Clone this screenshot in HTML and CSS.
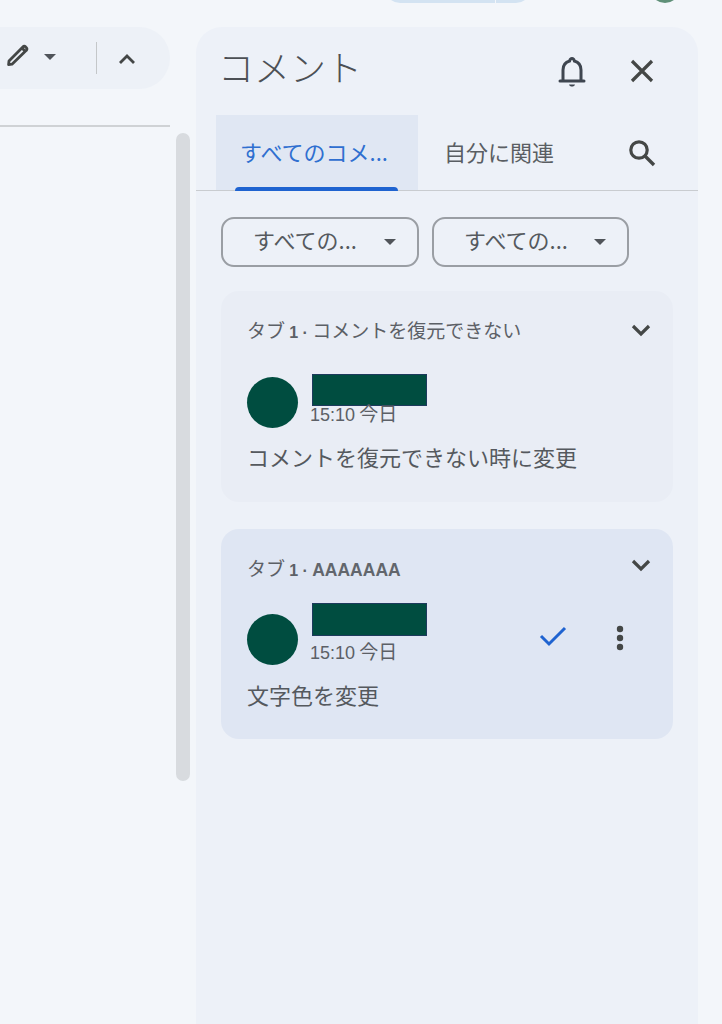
FILE: index.html
```html
<!DOCTYPE html>
<html lang="ja">
<head>
    <meta charset="UTF-8">
    <title>コメント</title>
    <link rel="stylesheet" href="styles.css">
</head>
<body>
    <!-- Top strip, only the bottom edge of the toolbar is visible -->
    <div class="top-strip">
        <div class="share-pill">
            <span class="share-main"></span>
            <span class="share-side"></span>
        </div>
        <span class="account-dot"></span>
    </div>

    <div class="workspace">
        <!-- Document side -->
        <div class="doc-side">
            <div class="doc-column">
                <div class="toolbar">
                    <svg class="icon-pencil" width="26" height="26" viewBox="0 0 26 26">
                        <path d="M7 23.2 L3.6 23.6 L4 20 L17.6 6.2 C18.6 5.2 19.6 5 20.6 5.9 L21.4 6.7 C22.3 7.6 22.1 8.7 21.1 9.6 Z" fill="none" stroke="#444746" stroke-width="2.8" stroke-linejoin="round"/>
                        <path d="M17 7 L20.4 10.4" stroke="#444746" stroke-width="2.8"/>
                    </svg>
                    <span class="caret caret-tool"></span>
                    <span class="tool-divider"></span>
                    <svg class="icon-up" width="20" height="14" viewBox="0 0 20 14">
                        <path d="M3 11 L10 4 L17 11" fill="none" stroke="#444746" stroke-width="2.8"/>
                    </svg>
                </div>
                <div class="ruler-line"></div>
            </div>
            <div class="scrollbar"></div>
        </div>

        <!-- Comment panel -->
        <div class="panel">
            <div class="panel-head">
                <h1 class="panel-title">コメント</h1>
                <svg class="icon-bell" width="30" height="34" viewBox="0 0 30 34">
                    <path d="M6 25 V15 C6 10 9 7 12.6 6 C13 4.4 14 3.6 15 3.6 C16 3.6 17 4.4 17.4 6 C21 7 24 10 24 15 V25" fill="none" stroke="#3f4650" stroke-width="3"/>
                    <path d="M3 26 H27" stroke="#3f4650" stroke-width="3" stroke-linecap="round"/>
                    <path d="M12 29.5 H18 C17.6 31 16.4 31.6 15 31.6 C13.6 31.6 12.4 31 12 29.5 Z" fill="#3f4650"/>
                </svg>
                <svg class="icon-close" width="26" height="26" viewBox="0 0 26 26">
                    <path d="M3 3 L23 23 M23 3 L3 23" stroke="#444746" stroke-width="3.2"/>
                </svg>
            </div>

            <div class="tabs">
                <div class="tab tab-active">すべてのコメ...</div>
                <div class="tab">自分に関連</div>
                <svg class="icon-search" width="30" height="30" viewBox="0 0 30 30">
                    <circle cx="12" cy="12" r="8.2" fill="none" stroke="#444746" stroke-width="3.2"/>
                    <path d="M18 18 L27 27" stroke="#444746" stroke-width="3.4"/>
                </svg>
            </div>

            <div class="filters">
                <div class="filter"><span>すべての...</span><span class="caret"></span></div>
                <div class="filter"><span>すべての...</span><span class="caret"></span></div>
            </div>

            <div class="card">
                <div class="card-title-row">
                    <span class="card-title">タブ <span class="latin">1 ·</span> コメントを復元できない</span>
                    <svg class="icon-chevron" width="22" height="14" viewBox="0 0 22 14">
                        <path d="M3 3 L11 11 L19 3" fill="none" stroke="#444746" stroke-width="3.2"/>
                    </svg>
                </div>
                <div class="author-row">
                    <span class="avatar"></span>
                    <div class="author-info">
                        <span class="name-block"></span>
                        <span class="time"><span class="clock">15:10</span> 今日</span>
                    </div>
                </div>
                <p class="comment-text">コメントを復元できない時に変更</p>
            </div>

            <div class="card card-selected">
                <div class="card-title-row">
                    <span class="card-title">タブ <span class="latin">1 ·</span> <span class="latin-strong">AAAAAAA</span></span>
                    <svg class="icon-chevron" width="22" height="14" viewBox="0 0 22 14">
                        <path d="M3 3 L11 11 L19 3" fill="none" stroke="#444746" stroke-width="3.2"/>
                    </svg>
                </div>
                <div class="author-row">
                    <span class="avatar"></span>
                    <div class="author-info">
                        <span class="name-block"></span>
                        <span class="time"><span class="clock">15:10</span> 今日</span>
                    </div>
                    <svg class="icon-check" width="30" height="24" viewBox="0 0 30 24">
                        <path d="M3 12 L11 20 L27 4" fill="none" stroke="#1f63d0" stroke-width="3"/>
                    </svg>
                    <svg class="icon-dots" width="8" height="26" viewBox="0 0 8 26">
                        <circle cx="4" cy="4" r="3.2" fill="#444746"/>
                        <circle cx="4" cy="13" r="3.2" fill="#444746"/>
                        <circle cx="4" cy="22" r="3.2" fill="#444746"/>
                    </svg>
                </div>
                <p class="comment-text">文字色を変更</p>
            </div>
        </div>
    </div>
</body>
</html>
```

FILE: styles.css
```css
/* General Styling */
html, body {
    height: 100%;
}

body {
    margin: 0;
    height: 1024px;
    overflow: hidden;
    background: #f3f6fa;
    color: #50545a;
    font-family: "Noto Sans CJK JP", "Noto Sans", sans-serif;
}

/* Top Strip */
.top-strip {
    display: flex;
    height: 27px;
    padding-left: 385px;
}

.share-pill {
    display: flex;
    gap: 1px;
    width: 146px;
    height: 30px;
    margin-top: -27px;
    border-radius: 15px;
    overflow: hidden;
}

.share-main {
    width: 110px;
    background: #d3e3f2;
}

.share-side {
    flex: 1;
    background: #d3e3f2;
}

.account-dot {
    width: 30px;
    height: 30px;
    margin: -27px 0 0 119px;
    background: #5f9078;
    border-radius: 50%;
}

.workspace {
    display: flex;
    height: 997px;
}

/* Document Side */
.doc-side {
    display: flex;
    width: 196px;
    flex-shrink: 0;
}

.doc-column {
    width: 170px;
}

.toolbar {
    display: flex;
    align-items: center;
    height: 62px;
    padding-left: 5px;
    background: #edf1f7;
    border-radius: 0 31px 31px 0;
    box-sizing: border-box;
}

.icon-pencil {
    margin-top: -8px;
}

.caret {
    width: 0;
    height: 0;
    border-left: 6px solid transparent;
    border-right: 6px solid transparent;
    border-top: 6px solid #50545a;
}

.caret-tool {
    margin: -2px 0 0 13px;
}

.tool-divider {
    width: 1px;
    height: 32px;
    margin-left: 40px;
    background: #c4c7c9;
}

.icon-up {
    margin-left: 20px;
    margin-top: 2px;
}

.ruler-line {
    height: 2px;
    margin-top: 36px;
    background: #cfd2d5;
}

.scrollbar {
    width: 14px;
    height: 648px;
    margin-top: 106px;
    margin-left: 6px;
    background: #d8dbdf;
    border-radius: 7px;
}

/* Comment Panel */
.panel {
    width: 502px;
    flex-shrink: 0;
    background: #edf1f8;
    border-radius: 26px 26px 0 0;
}

.panel-head {
    display: flex;
    align-items: center;
    height: 88px;
    padding-left: 22px;
    box-sizing: border-box;
}

.panel-title {
    flex: 1;
    margin: -10px 0 0;
    font-size: 36px;
    font-weight: 300;
    line-height: 1;
    color: #4c5055;
}

.icon-bell {
    margin: 2px 42px 0 0;
}

.icon-close {
    margin-right: 43px;
}

/* Tabs */
.tabs {
    display: flex;
    align-items: center;
    height: 76px;
    padding-left: 20px;
    border-bottom: 1px solid #c9ccd0;
    box-sizing: border-box;
}

.tab {
    display: flex;
    align-items: center;
    height: 100%;
    margin-right: 26px;
    padding-bottom: 4px;
    box-sizing: border-box;
    font-size: 22px;
    color: #5a5e63;
}

.tab-active {
    position: relative;
    justify-content: center;
    width: 202px;
    padding-right: 6px;
    background: #e0e7f3;
    color: #2f6fd0;
    white-space: nowrap;
}

.tab-active::after {
    content: "";
    position: absolute;
    left: 19px;
    right: 20px;
    bottom: -1px;
    height: 4px;
    background: #1f63d0;
    border-radius: 4px 4px 0 0;
}

.icon-search {
    margin-left: 47px;
}

/* Filters */
.filters {
    display: flex;
    gap: 13px;
    padding: 26px 0 24px 25px;
}

.filter {
    display: flex;
    align-items: center;
    justify-content: space-between;
    width: 198px;
    height: 50px;
    padding: 0 21px 0 30px;
    border: 2px solid #9a9ea4;
    border-radius: 13px;
    box-sizing: border-box;
    font-size: 22px;
    color: #55595e;
}

.filter span:first-child {
    margin-top: -7px;
}

.filter + .filter {
    width: 197px;
}

/* Cards */
.card {
    width: 452px;
    height: 211px;
    margin: 0 0 27px 25px;
    padding: 25px 21px 0 26px;
    background: #e9edf5;
    border-radius: 18px;
    box-sizing: border-box;
}

.card-selected {
    height: 210px;
    background: #dfe6f3;
}

.card-title-row {
    display: flex;
    align-items: flex-start;
    justify-content: space-between;
    height: 28px;
}

.card-title {
    font-size: 19px;
    line-height: 28px;
    color: #5c6066;
}

.latin {
    font-family: "Liberation Sans", sans-serif;
    font-size: 16px;
    font-weight: 700;
}

.latin-strong {
    font-family: "Liberation Sans", sans-serif;
    font-size: 17.5px;
    font-weight: 700;
    color: #62666c;
}

.icon-chevron {
    margin-top: 7px;
}

.card-selected .icon-chevron {
    margin-top: 4px;
}

.author-row {
    display: flex;
    align-items: flex-start;
    height: 63px;
    margin-top: 33px;
}

.card-selected .author-row {
    height: 75px;
    margin-top: 21px;
}

.avatar {
    width: 51px;
    height: 51px;
    flex-shrink: 0;
    background: #004d40;
    border-radius: 50%;
}

.author-info {
    display: flex;
    flex-direction: column;
    flex: 1;
    margin-left: 12px;
}

.name-block {
    width: 115px;
    height: 32px;
    margin: -3px 0 0 2px;
    background: #004d40;
    border: 1px solid #1d3a5c;
    box-sizing: border-box;
}

.time {
    margin-top: -5px;
    font-size: 19px;
    line-height: 24px;
    color: #5c6066;
}

.clock {
    font-family: "Liberation Sans", sans-serif;
    font-size: 18px;
}

.card-selected .avatar {
    margin-top: 11px;
}

.card-selected .name-block {
    margin-top: 0;
    height: 33px;
}

.card-selected .time {
    margin-top: 3px;
}

.icon-check {
    margin: 21px 48px 0 0;
}

.icon-dots {
    margin: 22px 28px 0 0;
}

.comment-text {
    margin: 0;
    font-size: 22px;
    line-height: 32px;
    color: #55595e;
}
```
